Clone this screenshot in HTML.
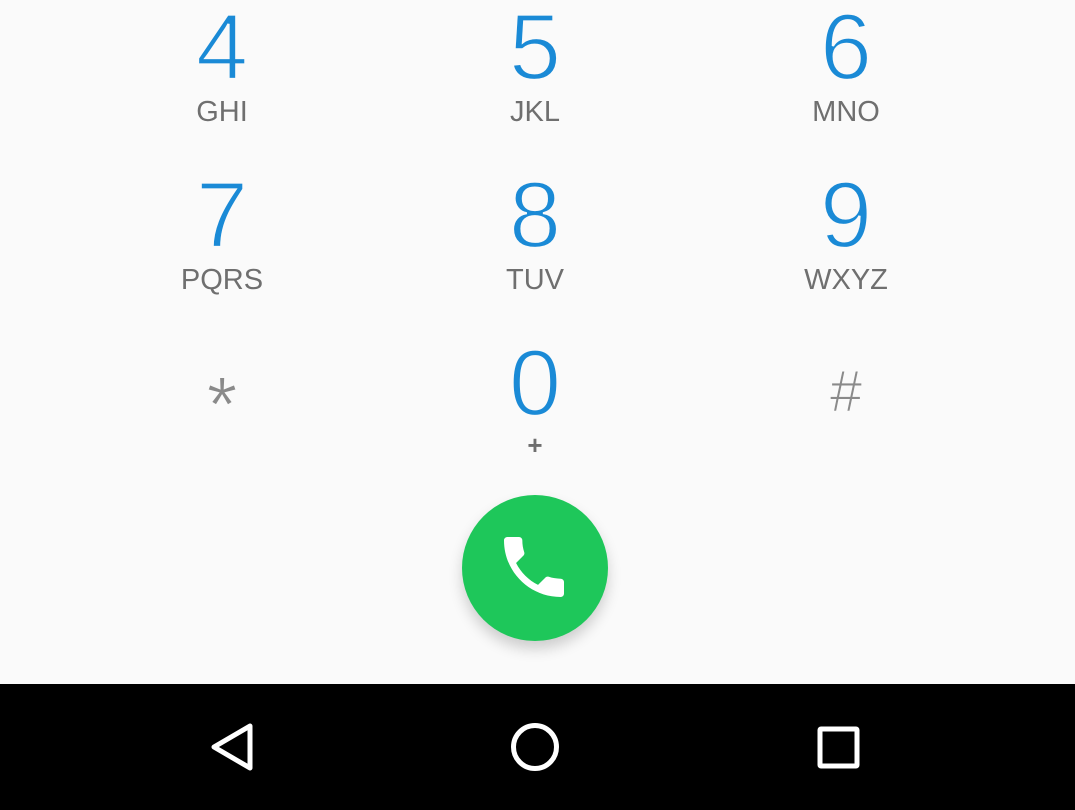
<!DOCTYPE html>
<html><head><meta charset="utf-8"><style>
body{margin:0;width:1075px;height:810px;background:#fafafa;position:relative;overflow:hidden;font-family:"Liberation Sans",sans-serif}
.d{position:absolute;width:200px;text-align:center;font-size:94px;line-height:94px;color:#1a8ad6;-webkit-text-stroke:2.2px #fafafa;paint-order:normal}
.l{position:absolute;width:200px;text-align:center;font-size:29px;line-height:30px;color:#6f6f6f}
.g{color:#8a8a8a}
</style></head><body>
<div class="d" style="left:122px;top:0">4</div><div class="l" style="left:122px;top:97px">GHI</div>
<div class="d" style="left:435px;top:0">5</div><div class="l" style="left:435px;top:97px">JKL</div>
<div class="d" style="left:746px;top:0">6</div><div class="l" style="left:746px;top:97px">MNO</div>
<div class="d" style="left:122px;top:168px">7</div><div class="l" style="left:122px;top:265px">PQRS</div>
<div class="d" style="left:435px;top:168px">8</div><div class="l" style="left:435px;top:265px">TUV</div>
<div class="d" style="left:746px;top:168px">9</div><div class="l" style="left:746px;top:265px">WXYZ</div>
<div class="d g" style="left:122px;top:357px;font-size:78px;-webkit-text-stroke:1px #fafafa">*</div>
<div class="d" style="left:435px;top:336px">0</div><div class="l" style="left:435px;top:430px;font-weight:bold;font-size:26px">+</div>
<div class="d g" style="left:746px;top:363px;font-size:58px;line-height:58px;-webkit-text-stroke:1px #fafafa">#</div>
<div style="position:absolute;left:462px;top:495px;width:146px;height:146px;border-radius:50%;background:#1ec75a;box-shadow:0 8px 14px rgba(0,0,0,0.18)"></div>
<svg style="position:absolute;left:494px;top:527px" width="80" height="80" viewBox="0 0 24 24"><path fill="#fff" d="M6.62 10.79c1.44 2.83 3.76 5.14 6.59 6.59l2.2-2.2c.27-.27.67-.36 1.02-.24 1.12.37 2.33.57 3.57.57.55 0 1 .45 1 1V20c0 .55-.45 1-1 1-9.39 0-17-7.610-17-17 0-.55.45-1 1-1h3.5c.55 0 1 .45 1 1 0 1.25.2 2.45.57 3.57.11.35.03.74-.25 1.02l-2.2 2.2z"/></svg>
<div style="position:absolute;left:0;top:684px;width:1075px;height:126px;background:#000"></div>
<svg style="position:absolute;left:0;top:684px" width="1075" height="126">
<path d="M250 42 L214 63 L250 84 Z" fill="none" stroke="#fff" stroke-width="5" stroke-linejoin="round"/>
<circle cx="535" cy="63" r="21.5" fill="none" stroke="#fff" stroke-width="5"/>
<rect x="820" y="45" width="37" height="37" fill="none" stroke="#fff" stroke-width="5" rx="1"/>
</svg>
</body></html>
